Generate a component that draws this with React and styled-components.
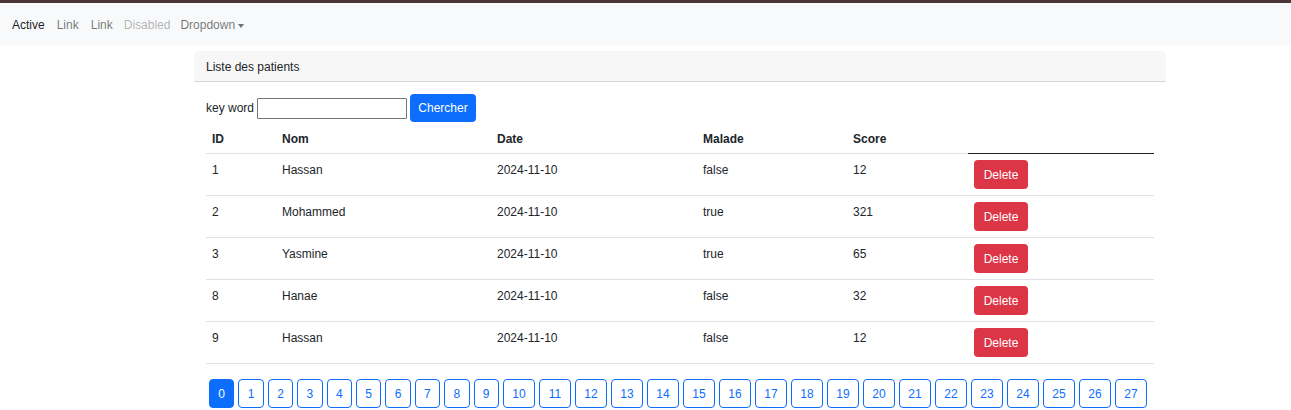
import React from "react";
import styled, { createGlobalStyle } from "styled-components";

const Global = createGlobalStyle`
  html, body { margin: 0; padding: 0; background: #fff; }
  body {
    font-family: "Liberation Sans", Arial, sans-serif;
    font-size: 12px;
    color: #212529;
  }
  * { box-sizing: border-box; }
`;

const TopLine = styled.div`
  height: 3px;
  background: #4a3636;
`;

const NavBar = styled.nav`
  height: 42px;
  background: #f8f9fa;
  display: flex;
  align-items: center;
  padding: 0 6px;
`;

const NavLink = styled.span`
  padding: 0 ${(p) => (p.$tight ? 5 : 6)}px;
  font-size: 12px;
  line-height: 20px;
  margin-top: 2px;
  color: ${(p) =>
    p.$state === "active" ? "rgba(0,0,0,0.9)" : p.$state === "disabled" ? "rgba(0,0,0,0.3)" : "rgba(0,0,0,0.55)"};
  display: inline-flex;
  align-items: center;
`;

const Caret = styled.span`
  display: inline-block;
  margin-left: 3px;
  border-top: 4px solid currentColor;
  border-left: 3.5px solid transparent;
  border-right: 3.5px solid transparent;
  margin-top: 1px;
`;

const Page = styled.main`
  padding-left: 194px;
  padding-top: 6px;
`;

const Card = styled.section`
  width: 972px;
  border-radius: 5px;
`;

const CardHeader = styled.div`
  height: 31px;
  background: #f7f7f7;
  border-bottom: 1px solid #d6d6d6;
  border-radius: 5px 5px 0 0;
  padding: 2px 12px 0;
  display: flex;
  align-items: center;
`;

const CardBody = styled.div`
  padding: 12px 12px 0 12px;
`;

const SearchForm = styled.form`
  display: flex;
  align-items: center;
  height: 28px;
  margin: 0;
`;

const Label = styled.label`
  margin-right: 3px;
`;

const Input = styled.input`
  width: 150px;
  height: 21px;
  border: 1px solid #767676;
  border-radius: 1px;
  padding: 0 2px;
  margin: 0 3px 0 0;
`;

const PrimaryButton = styled.button`
  height: 28px;
  width: 66px;
  padding: 0;
  border: none;
  border-radius: 4px;
  background: #0d6efd;
  color: #fff;
  font-family: inherit;
  font-size: 12px;
`;

const Table = styled.table`
  width: 948px;
  border-collapse: collapse;
  margin-top: 2px;
  table-layout: fixed;
`;

const Th = styled.th`
  text-align: left;
  font-weight: 700;
  line-height: 18px;
  padding: 6px 6px 5px;
  border-bottom: 1px solid ${(p) => (p.$dark ? "#212529" : "#dee2e6")};
`;

const Td = styled.td`
  line-height: 21px;
  padding: 6px 6px;
  vertical-align: top;
  border-bottom: 1px solid #dee2e6;
  height: 42px;
`;

const DeleteButton = styled.button`
  height: 29px;
  width: 54px;
  border: none;
  border-radius: 4px;
  background: #dc3545;
  color: #fff;
  font-family: inherit;
  font-size: 12px;
  padding: 0;
`;

const Pagination = styled.div`
  display: flex;
  gap: 4px;
  margin-top: 15px;
  padding-left: 3px;
`;

const PageButton = styled.button`
  height: 29px;
  width: ${(p) => (p.$wide ? 32 : 25.4)}px;
  padding: 0;
  border: 1px solid #0d6efd;
  border-radius: 4px;
  background: ${(p) => (p.$active ? "#0d6efd" : "#fff")};
  color: ${(p) => (p.$active ? "#fff" : "#0d6efd")};
  font-family: inherit;
  font-size: 12px;
  line-height: 1;
  padding-top: 1px;
`;

const patients = [
  { id: 1, nom: "Hassan", date: "2024-11-10", malade: "false", score: 12 },
  { id: 2, nom: "Mohammed", date: "2024-11-10", malade: "true", score: 321 },
  { id: 3, nom: "Yasmine", date: "2024-11-10", malade: "true", score: 65 },
  { id: 8, nom: "Hanae", date: "2024-11-10", malade: "false", score: 32 },
  { id: 9, nom: "Hassan", date: "2024-11-10", malade: "false", score: 12 },
];

const widths = [70, 215, 206, 150, 121, 186];

export default function App() {
  return (
    <>
      <Global />
      <TopLine />
      <NavBar>
        <NavLink $state="active">Active</NavLink>
        <NavLink>Link</NavLink>
        <NavLink>Link</NavLink>
        <NavLink $state="disabled" $tight>Disabled</NavLink>
        <NavLink $tight>
          Dropdown<Caret />
        </NavLink>
      </NavBar>
      <Page>
        <Card>
          <CardHeader>Liste des patients</CardHeader>
          <CardBody>
            <SearchForm onSubmit={(e) => e.preventDefault()}>
              <Label>key word</Label>
              <Input type="text" />
              <PrimaryButton type="submit">Chercher</PrimaryButton>
            </SearchForm>
            <Table>
              <colgroup>
                {widths.map((w, i) => (
                  <col key={i} style={{ width: w }} />
                ))}
              </colgroup>
              <thead>
                <tr>
                  <Th>ID</Th>
                  <Th>Nom</Th>
                  <Th>Date</Th>
                  <Th>Malade</Th>
                  <Th>Score</Th>
                  <Th $dark />
                </tr>
              </thead>
              <tbody>
                {patients.map((p, i) => (
                  <tr key={i}>
                    <Td>{p.id}</Td>
                    <Td>{p.nom}</Td>
                    <Td>{p.date}</Td>
                    <Td>{p.malade}</Td>
                    <Td>{p.score}</Td>
                    <Td>
                      <DeleteButton>Delete</DeleteButton>
                    </Td>
                  </tr>
                ))}
              </tbody>
            </Table>
            <Pagination>
              {Array.from({ length: 28 }, (_, i) => (
                <PageButton key={i} $active={i === 0} $wide={i >= 10}>
                  {i}
                </PageButton>
              ))}
            </Pagination>
          </CardBody>
        </Card>
      </Page>
    </>
  );
}
